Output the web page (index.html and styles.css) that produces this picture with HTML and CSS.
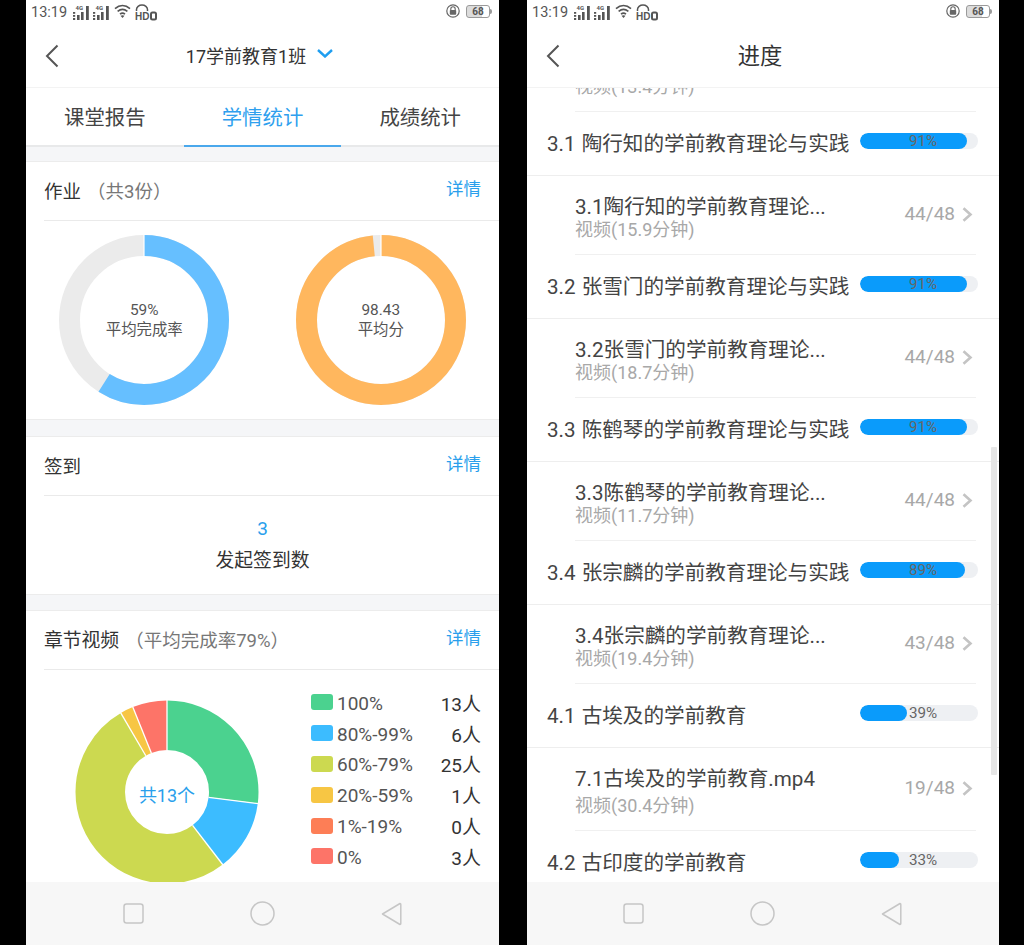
FILE: index.html
```html
<!DOCTYPE html>
<html lang="zh-CN">
<head>
<meta charset="utf-8">
<title>学情统计</title>
<link rel="stylesheet" href="styles.css">
</head>
<body>
<svg class="defs" width="0" height="0" aria-hidden="true">
  <symbol id="sig" viewBox="0 0 16 15">
    <rect x="0" y="7" width="2.200" height="1.800"/><rect x="0" y="10" width="2.200" height="1.800"/><rect x="0" y="13" width="2.200" height="2"/>
    <rect x="4" y="10" width="2.600" height="5"/><rect x="8" y="7" width="2.600" height="8"/><rect x="13" y="1" width="2.800" height="14"/>
  </symbol>
  <symbol id="wifi" viewBox="0 0 17 14">
    <path d="M1 4.6C5.6.6 11.4.6 16 4.6M3.6 7.4c3.2-2.6 6.6-2.6 9.800 0M6 10.100c1.700-1.300 3.300-1.300 5 0" fill="none" stroke="#555" stroke-width="1.600"/>
    <path d="M8.500 14l-2-2.200c1.300-.9 2.700-.9 4 0z" fill="#555"/>
  </symbol>
  <symbol id="hd" viewBox="0 0 22 17">
    <path d="M1.500 7V5.500a5.500 4.500 0 0 1 11 0V7" fill="none" stroke="#555" stroke-width="1.500"/>
    <rect x="16" y="8.500" width="5" height="7" rx="1.500" fill="none" stroke="#555" stroke-width="2"/>
  </symbol>
  <symbol id="lock" viewBox="0 0 14 14">
    <circle cx="7" cy="7" r="6.200" fill="none" stroke="#666" stroke-width="1.200"/>
    <path d="M4.800 6.300V5a2.200 2.200 0 0 1 4.400 0v1.300" fill="none" stroke="#666" stroke-width="1.100"/>
    <rect x="3.800" y="6" width="6.400" height="4.800" rx=".8" fill="#666"/>
  </symbol>
  <symbol id="chev" viewBox="0 0 14 24"><path d="M12.500 1.500 2 12l10.500 10.500" fill="none" stroke="#555" stroke-width="2"/></symbol>
  <symbol id="right" viewBox="0 0 11 15"><path d="M1.500 1.300 8.500 7.500l-7 6.200" fill="none" stroke="#c4c4c4" stroke-width="2.600"/></symbol>
  <symbol id="b-sq" viewBox="0 0 21 21"><rect x="1" y="1" width="19" height="19" rx="2.500" fill="none" stroke="#c6c6c6" stroke-width="1.500"/></symbol>
  <symbol id="b-ci" viewBox="0 0 25 25"><circle cx="12.500" cy="12.500" r="11.500" fill="none" stroke="#c6c6c6" stroke-width="1.500"/></symbol>
  <symbol id="b-tr" viewBox="0 0 21 24"><path d="M1.500 12 19 1.500q.8 0 .8 1v19q0 1-.8 1z" fill="none" stroke="#c6c6c6" stroke-width="1.500" stroke-linejoin="round"/></symbol>
</svg>

<main class="stage">
  <section class="screen screen-left">
    <div class="status">
      <span class="time">13:19</span>
      <svg class="i-sig" viewBox="0 0 16 15"><use href="#sig"/><text x="2.500" y="5.400" class="sig-t">4G</text></svg>
      <svg class="i-sig i-sig2" viewBox="0 0 16 15"><use href="#sig"/><text x="2.500" y="5.400" class="sig-t">4G</text></svg>
      <svg class="i-wifi"><use href="#wifi"/></svg>
      <svg class="i-hd" viewBox="0 0 22 17"><use href="#hd"/><text x="0" y="15.500" class="hd-t">HD</text></svg>
      <span class="grow"></span>
      <svg class="i-lock"><use href="#lock"/></svg>
      <span class="battery">68</span>
    </div>
    <header class="topbar">
      <svg class="back"><use href="#chev"/></svg>
      <div class="topbar-title small">17学前教育1班
        <svg class="drop" viewBox="0 0 16 9"><path d="M1 1l7 6.500L15 1" fill="none" stroke="#1f9ef0" stroke-width="2.400"/></svg>
      </div>
    </header>
    <nav class="tabs">
      <div class="tab">课堂报告</div>
      <div class="tab active">学情统计</div>
      <div class="tab">成绩统计</div>
    </nav>

    <div class="content">
      <div class="card">
        <div class="card-head">
          <span class="card-title">作业</span><span class="card-sub">（共3份）</span>
          <span class="more">详情</span>
        </div>
        <div class="donuts">
          <div class="donut">
            <svg class="donut-svg" viewBox="0 0 170 170">
              <g transform="rotate(-90 85 85)">
                <circle cx="85" cy="85" r="74.500" pathLength="100" class="ring ring-grey"/>
                <circle cx="85" cy="85" r="74.500" pathLength="100" class="ring ring-blue" stroke-dasharray="59 100"/>
              </g>
              <line x1="85" y1="0" x2="85" y2="22" class="sep"/>
            </svg>
            <div class="donut-label"><span>59%</span><span>平均完成率</span></div>
          </div>
          <div class="donut">
            <svg class="donut-svg" viewBox="0 0 170 170">
              <g transform="rotate(-90 85 85)">
                <circle cx="85" cy="85" r="74.500" pathLength="100" class="ring ring-grey"/>
                <circle cx="85" cy="85" r="74.500" pathLength="100" class="ring ring-orange" stroke-dasharray="98.430 100"/>
              </g>
              <line x1="85" y1="0" x2="85" y2="22" class="sep"/>
            </svg>
            <div class="donut-label"><span>98.43</span><span>平均分</span></div>
          </div>
        </div>
      </div>

      <div class="card">
        <div class="card-head">
          <span class="card-title">签到</span>
          <span class="more">详情</span>
        </div>
        <div class="signin">
          <div class="signin-num">3</div>
          <div class="signin-label">发起签到数</div>
        </div>
      </div>

      <div class="card card-last">
        <div class="card-head">
          <span class="card-title card-title-lg">章节视频</span><span class="card-sub card-sub-lg">（平均完成率79%）</span>
          <span class="more">详情</span>
        </div>
        <div class="pie-row">
          <div class="pie">
            <svg class="pie-svg" viewBox="0 0 184 184">
              <g transform="rotate(-90 92 92)" fill="none" stroke-width="49.500">
                <circle cx="92" cy="92" r="66.750" pathLength="360" stroke="#4bd28f" stroke-dasharray="97.300 360"/>
                <circle cx="92" cy="92" r="66.750" pathLength="360" stroke="#3cbcff" stroke-dasharray="45.200 360" stroke-dashoffset="-97.300"/>
                <circle cx="92" cy="92" r="66.750" pathLength="360" stroke="#ccd950" stroke-dasharray="187.200 360" stroke-dashoffset="-142.500"/>
                <circle cx="92" cy="92" r="66.750" pathLength="360" stroke="#f7c644" stroke-dasharray="8.400 360" stroke-dashoffset="-329.700"/>
                <circle cx="92" cy="92" r="66.750" pathLength="360" stroke="#fd7468" stroke-dasharray="21.900 360" stroke-dashoffset="-338.100"/>
              </g>
              <g class="pie-seps">
                <line x1="92" y1="0" x2="92" y2="50"/>
                <line x1="92" y1="0" x2="92" y2="50" transform="rotate(97.300 92 92)"/>
                <line x1="92" y1="0" x2="92" y2="50" transform="rotate(142.500 92 92)"/>
                <line x1="92" y1="0" x2="92" y2="50" transform="rotate(329.700 92 92)"/>
                <line x1="92" y1="0" x2="92" y2="50" transform="rotate(338.100 92 92)"/>
              </g>
            </svg>
            <div class="pie-label">共13个</div>
          </div>
          <ul class="legend">
            <li class="legend-row"><i class="swatch c1"></i><span class="legend-name">100%</span><span class="legend-count">13人</span></li>
            <li class="legend-row"><i class="swatch c2"></i><span class="legend-name">80%-99%</span><span class="legend-count">6人</span></li>
            <li class="legend-row"><i class="swatch c3"></i><span class="legend-name">60%-79%</span><span class="legend-count">25人</span></li>
            <li class="legend-row"><i class="swatch c4"></i><span class="legend-name">20%-59%</span><span class="legend-count">1人</span></li>
            <li class="legend-row"><i class="swatch c5"></i><span class="legend-name">1%-19%</span><span class="legend-count">0人</span></li>
            <li class="legend-row"><i class="swatch c6"></i><span class="legend-name">0%</span><span class="legend-count">3人</span></li>
          </ul>
        </div>
      </div>
    </div>

    <footer class="navbar">
      <svg class="b-sq"><use href="#b-sq"/></svg>
      <svg class="b-ci"><use href="#b-ci"/></svg>
      <svg class="b-tr"><use href="#b-tr"/></svg>
    </footer>
  </section>

  <section class="screen screen-right">
    <div class="status">
      <span class="time">13:19</span>
      <svg class="i-sig" viewBox="0 0 16 15"><use href="#sig"/><text x="2.500" y="5.400" class="sig-t">4G</text></svg>
      <svg class="i-sig i-sig2" viewBox="0 0 16 15"><use href="#sig"/><text x="2.500" y="5.400" class="sig-t">4G</text></svg>
      <svg class="i-wifi"><use href="#wifi"/></svg>
      <svg class="i-hd" viewBox="0 0 22 17"><use href="#hd"/><text x="0" y="15.500" class="hd-t">HD</text></svg>
      <span class="grow"></span>
      <svg class="i-lock"><use href="#lock"/></svg>
      <span class="battery">68</span>
    </div>
    <header class="topbar">
      <svg class="back"><use href="#chev"/></svg>
      <div class="topbar-title">进度</div>
    </header>

    <div class="list">
      <div class="item item-clipped">
        <div class="item-text"><div class="item-title">&nbsp;</div><div class="item-sub">视频(13.4分钟)</div></div>
      </div>

      <div class="group"><span class="group-title">3.1 陶行知的学前教育理论与实践</span>
        <div class="bar"><div class="bar-fill" style="width:91%"></div><span class="bar-text">91%</span></div></div>
      <div class="item">
        <div class="item-text"><div class="item-title">3.1陶行知的学前教育理论...</div><div class="item-sub">视频(15.9分钟)</div></div>
        <span class="item-count">44/48</span><svg class="item-arrow"><use href="#right"/></svg>
      </div>

      <div class="group"><span class="group-title">3.2 张雪门的学前教育理论与实践</span>
        <div class="bar"><div class="bar-fill" style="width:91%"></div><span class="bar-text">91%</span></div></div>
      <div class="item">
        <div class="item-text"><div class="item-title">3.2张雪门的学前教育理论...</div><div class="item-sub">视频(18.7分钟)</div></div>
        <span class="item-count">44/48</span><svg class="item-arrow"><use href="#right"/></svg>
      </div>

      <div class="group"><span class="group-title">3.3 陈鹤琴的学前教育理论与实践</span>
        <div class="bar"><div class="bar-fill" style="width:91%"></div><span class="bar-text">91%</span></div></div>
      <div class="item">
        <div class="item-text"><div class="item-title">3.3陈鹤琴的学前教育理论...</div><div class="item-sub">视频(11.7分钟)</div></div>
        <span class="item-count">44/48</span><svg class="item-arrow"><use href="#right"/></svg>
      </div>

      <div class="group"><span class="group-title">3.4 张宗麟的学前教育理论与实践</span>
        <div class="bar"><div class="bar-fill" style="width:89%"></div><span class="bar-text">89%</span></div></div>
      <div class="item">
        <div class="item-text"><div class="item-title">3.4张宗麟的学前教育理论...</div><div class="item-sub">视频(19.4分钟)</div></div>
        <span class="item-count">43/48</span><svg class="item-arrow"><use href="#right"/></svg>
      </div>

      <div class="group"><span class="group-title">4.1 古埃及的学前教育</span>
        <div class="bar"><div class="bar-fill" style="width:40%"></div><span class="bar-text">39%</span></div></div>
      <div class="item item-tall">
        <div class="item-text"><div class="item-title">7.1古埃及的学前教育.mp4</div><div class="item-sub">视频(30.4分钟)</div></div>
        <span class="item-count">19/48</span><svg class="item-arrow"><use href="#right"/></svg>
      </div>

      <div class="group"><span class="group-title">4.2 古印度的学前教育</span>
        <div class="bar"><div class="bar-fill" style="width:33%"></div><span class="bar-text">33%</span></div></div>
    </div>
    <div class="scrollbar"></div>

    <footer class="navbar">
      <svg class="b-sq"><use href="#b-sq"/></svg>
      <svg class="b-ci"><use href="#b-ci"/></svg>
      <svg class="b-tr"><use href="#b-tr"/></svg>
    </footer>
  </section>
</main>
</body>
</html>
```

FILE: styles.css
```css
* { box-sizing: border-box; }
html, body { margin: 0; padding: 0; height: 100%; background: #000; }
body {
  font-family: Roboto, "Noto Sans CJK SC", sans-serif;
  color: #333;
  overflow: hidden;
}
ul { list-style: none; margin: 0; padding: 0; }
.defs { display: block; width: 0; height: 0; overflow: hidden; }
.sig-t { font: 700 6px Roboto, sans-serif; fill: #555; }
.hd-t { font: 700 10px "Liberation Sans", sans-serif; fill: #555; }
#sig rect { fill: #555; }

.stage { display: flex; gap: 28px; padding-left: 27px; height: 945px; }
.screen {
  position: relative;
  width: 472px;
  height: 945px;
  display: flex;
  flex-direction: column;
  background: #fff;
  overflow: hidden;
}
.screen-left { width: 473px; margin-left: -1px; }

/* status bar */
.status { height: 24px; flex: none; display: flex; align-items: center; padding: 0 6px 0 5px; }
.time { font-size: 14.500px; color: #555; width: 42px; }
.i-sig { width: 16px; height: 15px; fill: #555; }
.i-sig2 { margin-left: 4px; }
.i-wifi { width: 17px; height: 14px; margin-left: 5px; margin-top: -3px; }
.i-hd { width: 22px; height: 17px; margin-left: 4px; }
.grow { flex: 1; }
.i-lock { width: 14px; height: 14px; margin-top: -2px; }
.battery {
  position: relative;
  width: 24px; height: 13px; margin: -1px 3px 0 6px;
  border: 1px solid #9a9a9a; border-radius: 3px;
  background: linear-gradient(90deg, #dcdcdc 68%, #fff 68%);
  font-size: 10px; font-weight: 700; line-height: 11px; text-align: center; color: #555;
}
.battery::after {
  content: "";
  position: absolute; right: -3px; top: 3px;
  width: 2px; height: 5px;
  background: #9a9a9a; border-radius: 0 2px 2px 0;
}

/* top bar */
.topbar {
  height: 64px; flex: none;
  display: flex; align-items: center; justify-content: center;
  position: relative;
  border-bottom: 1px solid #f3f3f3;
}
.back { position: absolute; left: 19px; top: 20px; width: 14px; height: 24px; }
.topbar-title { font-size: 22.300px; color: #333; display: flex; align-items: center; margin-right: 6px; margin-bottom: 4px; }
.topbar-title.small { font-size: 18px; margin-right: 6px; margin-bottom: 2px; }
.drop { width: 16px; height: 9px; margin-left: 11px; margin-top: -2px; }

/* tabs */
.tabs { display: flex; height: 59px; flex: none; border-bottom: 2px solid #e8e9ea; }
.tab {
  flex: 1; font-size: 20.400px; color: #444;
  display: flex; align-items: center; justify-content: center;
  margin-bottom: -2px; padding-bottom: 2px; border-bottom: 2px solid transparent;
}
.tab.active { color: #2fa0ee; border-bottom-color: #4aa8ec; }

/* left content */
.content { flex: 1; min-height: 0; overflow: hidden; background: #f5f6f8; padding-top: 14px; display: flex; flex-direction: column; gap: 16px; }
.card { flex: none; background: #fff; border-top: 1px solid #ececec; border-bottom: 1px solid #ececec; }
.card-last { border-bottom: 0; margin-top: -1px; }
.card-head {
  height: 59px; margin-left: 18px; padding-right: 18px;
  display: flex; align-items: center;
  border-bottom: 1px solid #eaeaea;
}
.card-title { font-size: 18.500px; color: #333; margin-bottom: 3px; }
.card-title-lg { font-size: 18.800px; }
.card-sub { font-size: 18.500px; color: #777; margin-left: 6px; margin-bottom: 3px; }
.card-sub-lg { margin-left: 6px; }
.more { margin-left: auto; margin-bottom: 8px; font-size: 17.500px; color: #2a9fec; }

.donuts { display: flex; height: 198px; padding-top: 14px; }
.donut { flex: 1; display: grid; justify-items: center; align-items: start; }
.donut-svg, .donut-label { grid-area: 1 / 1; }
.donut-svg { width: 170px; height: 170px; }
.ring { fill: none; stroke-width: 21; }
.ring-grey { stroke: #ebebeb; }
.ring-blue { stroke: #66bfff; }
.ring-orange { stroke: #ffb75e; }
.sep { stroke: #fff; stroke-width: 1.200; }
.donut-label {
  margin-top: 64.500px;
  display: flex; flex-direction: column; align-items: center;
  font-size: 15.400px; line-height: 20px; color: #555;
}

.signin { height: 98px; display: flex; flex-direction: column; align-items: center; padding-top: 19px; }
.signin-num { font-size: 19px; line-height: 28px; color: #2a9fec; }
.signin-label { font-size: 18.800px; line-height: 34px; margin-top: 1px; color: #333; }

.pie-row { display: flex; align-items: flex-start; }
.pie { width: 184px; height: 184px; margin: 30px 0 0 49px; display: grid; place-items: center; flex: none; }
.pie-svg, .pie-label { grid-area: 1 / 1; }
.pie-svg { width: 184px; height: 184px; }
.pie-seps line { stroke: #fff; stroke-width: 1.300; }
.pie-label { font-size: 18px; color: #2a9fec; margin-top: 4px; }
.legend { flex: 1; margin: 18px 18px 0 52px; }
.legend-row { display: flex; align-items: center; height: 30.800px; }
.swatch { width: 22px; height: 16px; border-radius: 3px; flex: none; margin-right: 4px; margin-top: -2px; }
.c1 { background: #4bd28f; }
.c2 { background: #3cbcff; }
.c3 { background: #ccd950; }
.c4 { background: #f7c644; }
.c5 { background: #fd7e56; }
.c6 { background: #fd7468; }
.legend-name { flex: 1; font-size: 19px; color: #555; }
.legend-count { font-size: 19px; color: #333; margin-bottom: 2px; }

/* bottom nav */
.navbar { height: 63px; flex: none; background: #f7f7f7; position: relative; display: flex; align-items: center; z-index: 2; }
.b-sq { width: 21px; height: 21px; margin-left: 97px; }
.screen-right .b-sq { margin-left: 96px; }
.b-ci { width: 25px; height: 25px; margin-left: 106px; }
.b-tr { width: 21px; height: 24px; margin-left: 106px; }

/* right list */
.list { flex: 1; min-height: 0; overflow: hidden; }
.group {
  height: 64px; padding: 0 21px 0 20px;
  display: flex; align-items: center; justify-content: space-between;
  border-bottom: 1px solid #eeeeee;
}
.group-title { font-size: 20.600px; word-spacing: 1px; color: #444; margin-bottom: 4px; }
.bar {
  width: 118px; height: 16px; border-radius: 8px; background: #eef0f3;
  display: grid; margin-bottom: 5px; overflow: hidden;
}
.bar-fill, .bar-text { grid-area: 1 / 1; }
.bar-fill { height: 16px; background: #0a9bfb; border-radius: 8px; }
.bar-text { font-size: 15.200px; line-height: 16px; color: #666; padding-left: 49px; position: relative; }
.item {
  height: 79px; margin: 0 23px 0 48px;
  display: flex; align-items: center;
  border-bottom: 1px solid #f0f0f0;
}
.item-clipped { margin-top: -55px; }
.item-tall { height: 83px; }
.item-tall .item-sub { margin-top: 4px; }
.item-text { align-self: flex-start; padding-top: 19px; flex: 1; min-width: 0; }
.item-title { font-size: 20.600px; line-height: 24px; color: #444; white-space: nowrap; }
.item-sub { font-size: 18px; line-height: 22px; color: #a8a8a8; white-space: nowrap; }
.item-count { font-size: 19px; color: #a8a8a8; margin-top: -4px; }
.item-arrow { width: 11px; height: 15px; margin: -2px 3px 0 7px; }
.scrollbar { position: absolute; left: 464px; top: 447px; width: 6px; height: 328px; background: #e6e6e6; border-radius: 1px; }
```
